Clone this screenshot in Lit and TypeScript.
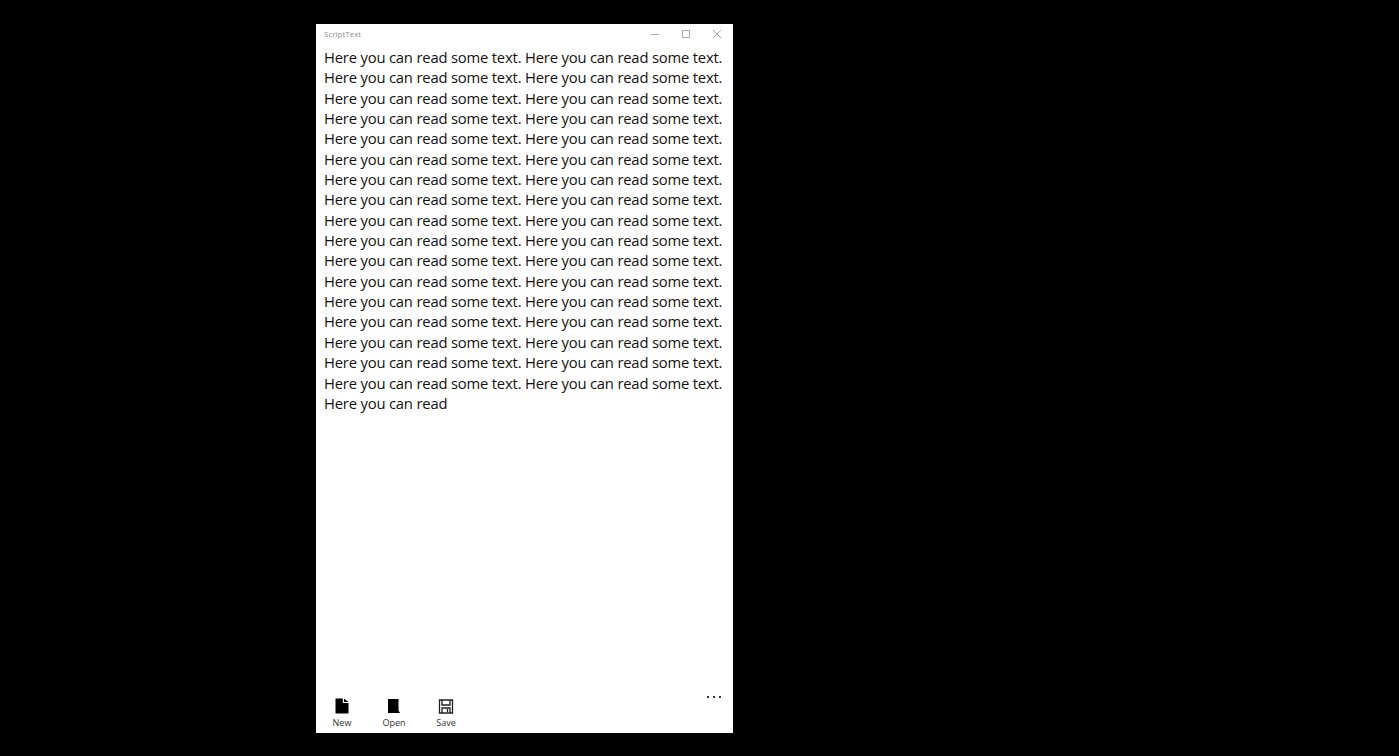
import { LitElement, html, css } from "lit";
import { customElement } from "lit/decorators.js";

const LINE = "Here you can read some text. Here you can read some text.";
const lines = [...Array(17).fill(LINE), "Here you can read"];

@customElement("app-root")
export class AppRoot extends LitElement {
  static styles = css`
    :host { display: block; height: 756px; background: #000; box-sizing: border-box; padding: 24px 0 23px 316px; font-family: "Open Sans", "Noto Sans", sans-serif; }
    .win { width: 417px; height: 709px; background: #fff; display: flex; flex-direction: column; }
    .title { height: 20px; flex: none; display: flex; align-items: center; padding: 0 1px 0 8px; font-size: 8px; color: #8f8f8f; }
    .title span { flex: 1; padding-bottom: 2px; }
    .ctl { width: 31px; height: 20px; display: flex; align-items: center; justify-content: center; }
    .ctl svg { width: 10px; height: 10px; stroke: #aaa; fill: none; stroke-width: 1; }
    .body { flex: 1; padding: 3px 8px 0; font-size: 14.8px; letter-spacing: -0.19px; line-height: 20.35px; color: #111; }
    .line { white-space: nowrap; }
    .bar { flex: none; height: 47px; display: flex; justify-content: space-between; }
    .btns { display: flex; padding-top: 12px; }
    .btn { width: 52px; display: flex; flex-direction: column; align-items: center; font-size: 9px; line-height: 12px; color: #333; }
    .btn svg { width: 16px; height: 16px; margin-bottom: 3px; }
    .more { display: flex; gap: 4px; padding: 0 12px 0 0; margin-top: 10px; }
    .more i { width: 2px; height: 2px; background: #333; display: block; }
  `;
  render() {
    return html`<div class="win">
      <div class="title"><span>ScriptText</span>
        <div class="ctl"><svg viewBox="0 0 10 10"><path d="M1 5.5h8"/></svg></div>
        <div class="ctl"><svg viewBox="0 0 10 10"><rect x="1.5" y="1.5" width="7" height="7"/></svg></div>
        <div class="ctl"><svg viewBox="0 0 10 10"><path d="M1 1l8 8M9 1l-8 8"/></svg></div>
      </div>
      <div class="body">${lines.map((l) => html`<div class="line">${l}</div>`)}</div>
      <div class="bar">
        <div class="btns">
          <div class="btn"><svg viewBox="0 0 16 16"><path d="M1.5 0.5h7.3v4.5h5.7v10.5h-13zM10 0.5l4.5 3.5h-4.5z" fill="#000"/></svg>New</div>
          <div class="btn"><svg viewBox="0 0 16 16"><path d="M2 1h10.5v11.5l1.5 2.5H2z" fill="#000"/></svg>Open</div>
          <div class="btn"><svg viewBox="0 0 16 16" fill="none" stroke="#222" stroke-width="1.3"><path d="M1.5 2h13v13h-13z"/><path d="M4 2v5h8V2M4 15v-5h8v5"/><path d="M9.5 11v3"/></svg>Save</div>
        </div>
        <div class="more"><i></i><i></i><i></i></div>
      </div>
    </div>`;
  }
}
